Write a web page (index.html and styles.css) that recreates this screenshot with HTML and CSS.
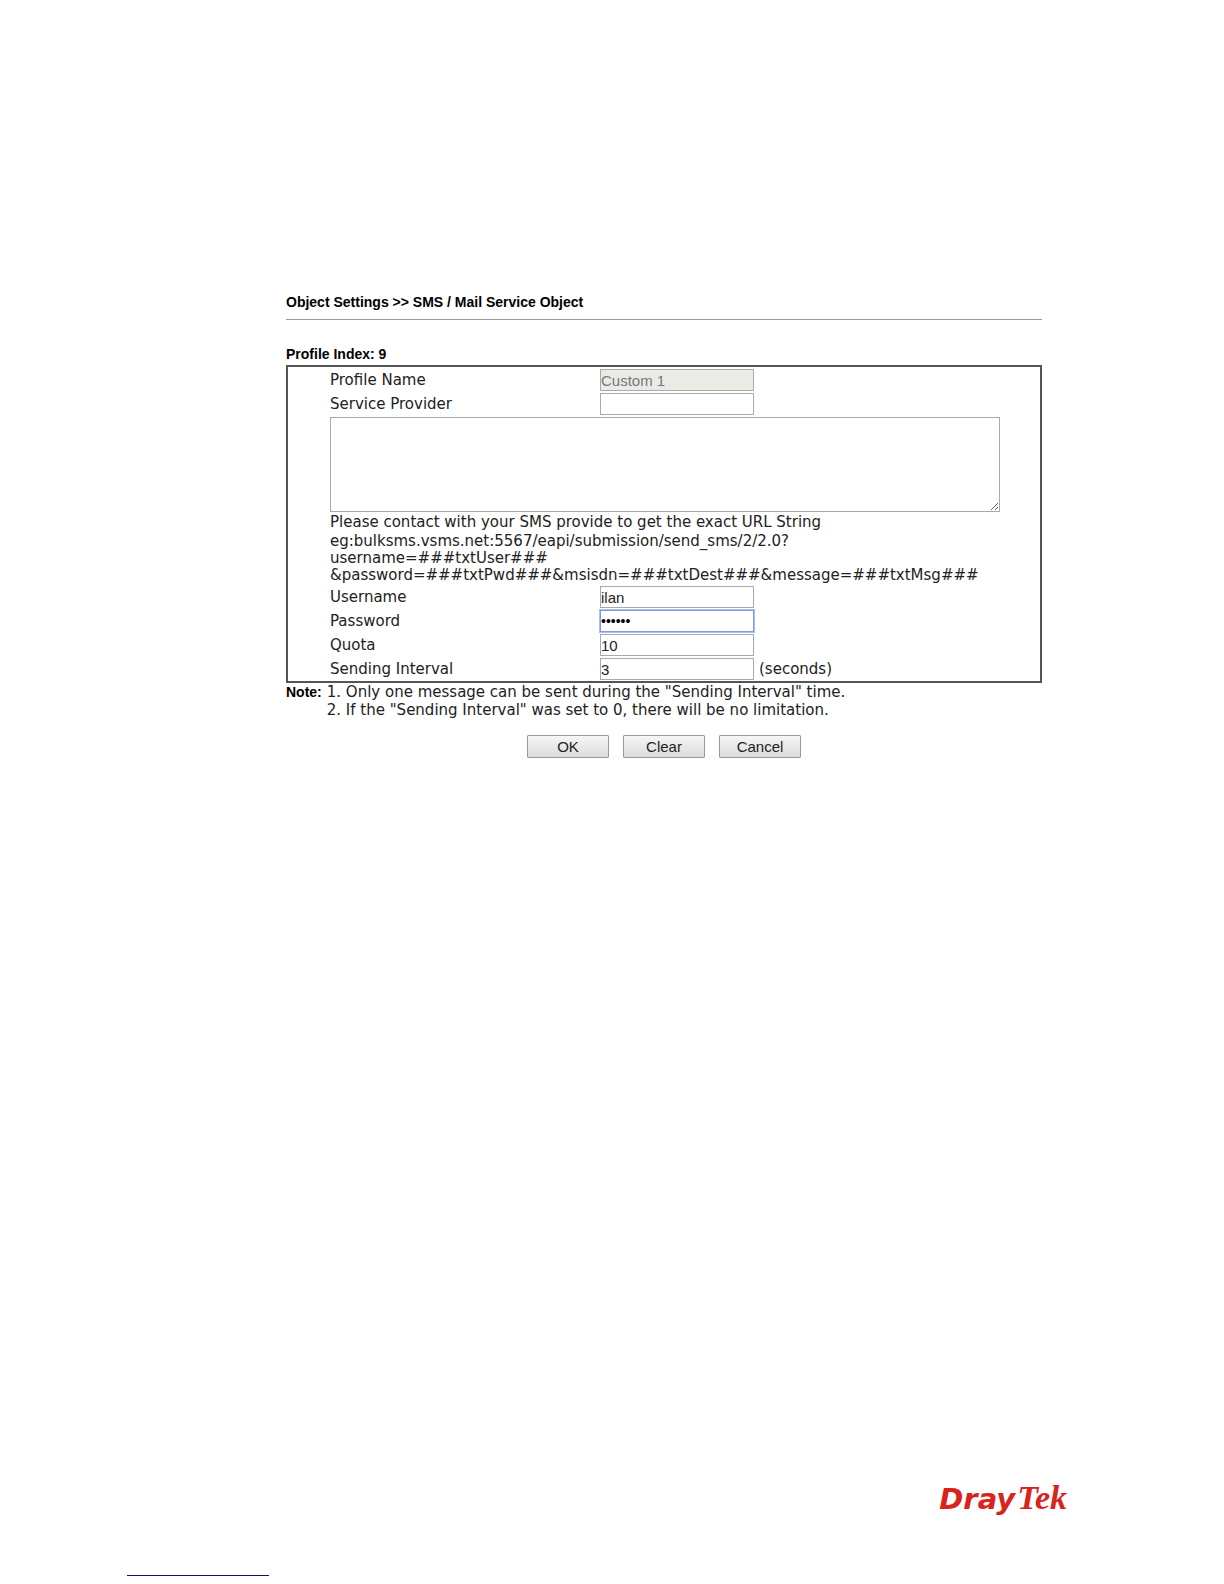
FILE: index.html
```
<!DOCTYPE html>
<html lang="en">
<head>
    <meta charset="UTF-8">
    <meta name="viewport" content="width=device-width, initial-scale=1.0">
    <title>SMS / Mail Service Object</title>
    <link rel="stylesheet" href="styles.css">
</head>
<body>
    <main>
        <h1>Object Settings &gt;&gt; SMS / Mail Service Object</h1>

        <form>
            <h2>Profile Index: 9</h2>
            <div class="panel">
                <div class="row">
                    <label for="profile">Profile Name</label>
                    <input type="text" id="profile" value="Custom 1" disabled>
                </div>
                <div class="row">
                    <label for="provider">Service Provider</label>
                    <input type="text" id="provider">
                </div>
                <textarea id="url" aria-label="URL String"></textarea>
                <p class="hint">Please contact with your SMS provide to get the exact URL String</p>
                <p class="example">eg:bulksms.vsms.net:5567/eapi/submission/send_sms/2/2.0?<br>username=###txtUser###<br>&amp;password=###txtPwd###&amp;msisdn=###txtDest###&amp;message=###txtMsg###</p>
                <div class="row">
                    <label for="username">Username</label>
                    <input type="text" id="username" value="ilan">
                </div>
                <div class="row">
                    <label for="password">Password</label>
                    <input type="password" id="password" class="active" value="secret">
                </div>
                <div class="row">
                    <label for="quota">Quota</label>
                    <input type="text" id="quota" value="10">
                </div>
                <div class="row">
                    <label for="interval">Sending Interval</label>
                    <input type="text" id="interval" value="3">
                    <span class="unit">(seconds)</span>
                </div>
            </div>

            <div class="note">
                <strong>Note:</strong>
                <div>
                    <p>1. Only one message can be sent during the "Sending Interval" time.</p>
                    <p>2. If the "Sending Interval" was set to 0, there will be no limitation.</p>
                </div>
            </div>

            <div class="buttons">
                <button type="button">OK</button>
                <button type="reset">Clear</button>
                <button type="button">Cancel</button>
            </div>
        </form>
    </main>

    <footer>
        <div class="logo"><span>Dray</span><i>Tek</i></div>
        <div class="rule"></div>
    </footer>
</body>
</html>
```

FILE: styles.css
```
* {
    box-sizing: border-box;
}
body {
    display: flex;
    flex-direction: column;
    min-height: 100vh;
    margin: 0;
    background: #fff;
    color: #222;
    font-family: "DejaVu Sans", Verdana, sans-serif;
    font-size: 15px;
    line-height: 17px;
}
main {
    flex: 1;
    padding: 294px 182px 0 286px;
}
h1, h2, p {
    margin: 0;
}
h1, h2, .note strong {
    color: #000;
    font-family: "Liberation Sans", Arial, sans-serif;
    font-size: 14px;
    font-weight: bold;
}
h1 {
    padding-bottom: 8px;
    border-bottom: 1px solid #999;
}
h2 {
    margin-top: 26px;
    padding-bottom: 2px;
}
.panel {
    padding: 1px 40px 0 42px;
    border: 2px solid #555;
}
.row {
    display: flex;
    align-items: center;
    height: 24px;
}
.row label {
    width: 270px;
}
.row input {
    width: 154px;
    height: 22px;
    padding: 0;
    border: 1px solid #aaa;
    background: #fff;
    color: #222;
    font-family: "Liberation Sans", Arial, sans-serif;
    font-size: 15px;
}
.row input:disabled {
    background: #ebebe6;
    color: #777;
}
.row input.active {
    border: 1px solid #7f9be0;
    outline: 1px solid #a9bff0;
    color: #000;
    font-size: 14px;
}
.unit {
    margin-left: 5px;
}
textarea {
    display: block;
    width: 100%;
    height: 95px;
    margin-top: 1px;
    border: 1px solid #aaa;
}
.hint {
    padding-top: 2px;
}
.example {
    padding: 2px 0 1px;
}
.note {
    display: flex;
    gap: 5px;
    line-height: 18px;
}
.buttons {
    display: flex;
    justify-content: center;
    gap: 14px;
    margin-top: 16px;
}
button {
    width: 82px;
    height: 23px;
    padding: 0;
    border: 1px solid #999;
    border-radius: 1px;
    background: linear-gradient(#f6f6f6, #dcdcdc);
    color: #222;
    font-family: "Liberation Sans", Arial, sans-serif;
    font-size: 15px;
}
footer {
    padding-bottom: 8px;
}
.logo {
    display: flex;
    align-items: baseline;
    justify-content: flex-end;
    gap: 2px;
    padding-right: 157px;
    color: #d9231d;
    line-height: 36px;
}
.logo span {
    font-family: "DejaVu Sans", Verdana, sans-serif;
    font-size: 29px;
    font-style: italic;
    font-weight: bold;
}
.logo i {
    font-family: "Liberation Serif", serif;
    font-size: 34px;
    font-weight: bold;
}
.rule {
    width: 142px;
    height: 1px;
    margin: 58px 0 0 127px;
    background: #10107c;
}
```
